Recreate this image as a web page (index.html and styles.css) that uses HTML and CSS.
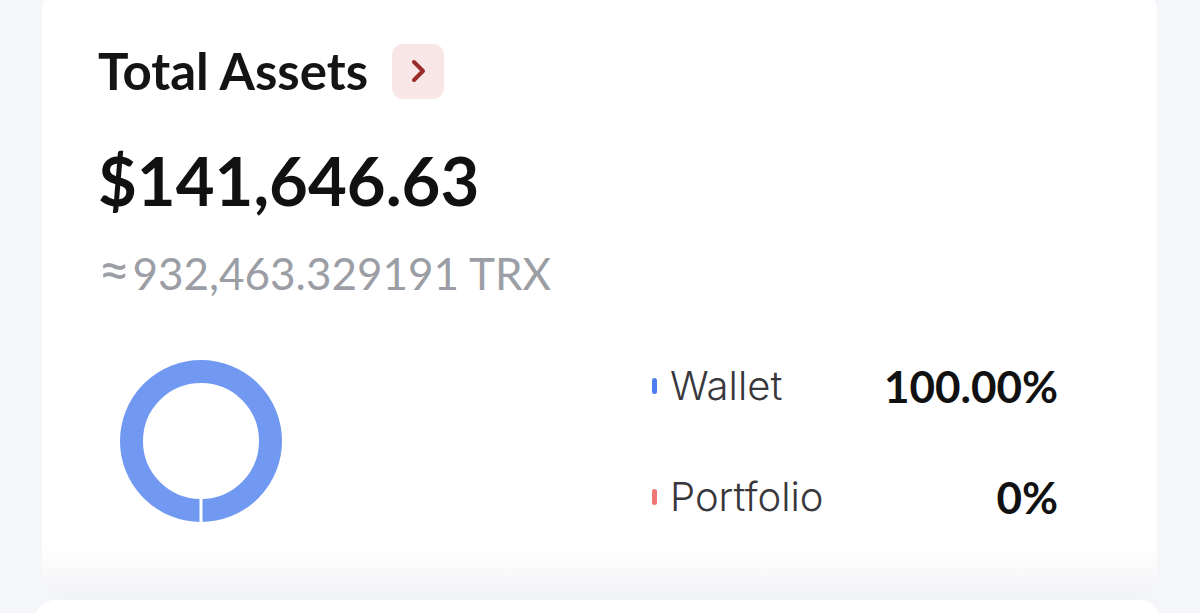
FILE: index.html
```html
<!DOCTYPE html>
<html lang="en">
<head>
    <meta charset="UTF-8">
    <meta name="viewport" content="width=device-width, initial-scale=1.0">
    <title>Total Assets</title>
    <link rel="stylesheet" href="styles.css">
</head>
<body>

<main class="page">
    <section class="card assets">
        <div class="title-row">
            <h1 class="title">Total Assets</h1>
            <a class="more" href="#">
                <svg width="24" height="28" viewBox="0 0 24 28">
                    <path d="M8 5 L17 14 L8 23" fill="none" stroke="#9b2b2b" stroke-width="4" stroke-linecap="round" stroke-linejoin="round"/>
                </svg>
            </a>
        </div>
        <p class="amount">$141,646.63</p>
        <p class="approx"><span class="approx-sign">≈</span>932,463.329191 TRX</p>

        <div class="chart-row">
            <svg class="donut" width="164" height="164" viewBox="0 0 164 164">
                <circle cx="82" cy="82" r="69.5" fill="none" stroke="#7299f2" stroke-width="23"/>
                <line x1="82" y1="138" x2="82" y2="164" stroke="#fff" stroke-width="3"/>
            </svg>
            <ul class="legend">
                <li class="legend-item">
                    <span class="dot wallet"></span>
                    <span class="label">Wallet</span>
                    <span class="value">100.00%</span>
                </li>
                <li class="legend-item">
                    <span class="dot portfolio"></span>
                    <span class="label">Portfolio</span>
                    <span class="value">0%</span>
                </li>
            </ul>
        </div>
    </section>

    <section class="card next"></section>
</main>

</body>
</html>
```

FILE: styles.css
```css
body {
    margin: 0;
    padding: 0;
    background-color: #f5f6fa;
    font-family: Lato, "Noto Sans", sans-serif;
    color: #111;
    overflow: hidden;
}
.page {
    display: flex;
    flex-direction: column;
}
.card {
    background-color: #fff;
    border-radius: 24px;
}
.assets {
    margin: -14px 43px 0 42px;
    height: 614px;
    padding: 0 99px 0 56px;
    box-sizing: border-box;
    background: linear-gradient(to bottom, #fff 91%, #f2f3f5 100%);
}
.title-row {
    display: flex;
    align-items: center;
    gap: 24px;
    padding-top: 57px;
}
.title {
    margin: 0;
    font-size: 51px;
    font-weight: 700;
    line-height: 56px;
    color: #141414;
}
.more {
    display: flex;
    align-items: center;
    justify-content: center;
    width: 52px;
    height: 55px;
    border-radius: 11px;
    background-color: #f9e7e7;
}
.amount {
    margin: 46px 0 0;
    font-size: 67px;
    font-weight: 700;
    line-height: 70px;
    color: #111;
}
.approx {
    margin: 34px 0 0;
    font-size: 44px;
    font-weight: 400;
    line-height: 48px;
    color: #9c9ea5;
}
.approx-sign {
    font-size: 56px;
    line-height: 40px;
    margin-right: 2px;
}
.chart-row {
    display: flex;
    align-items: center;
    margin-top: 62px;
}
.donut {
    margin-left: 21px;
}
.legend {
    list-style: none;
    margin: 0 0 0 auto;
    padding: 0;
    width: 406px;
    display: flex;
    flex-direction: column;
    gap: 73px;
}
.legend-item {
    display: flex;
    align-items: center;
    height: 38px;
}
.dot {
    width: 5px;
    height: 16px;
    border-radius: 3px;
    margin-right: 13px;
}
.dot.wallet {
    background-color: #4b7ff0;
}
.dot.portfolio {
    background-color: #f07575;
}
.label {
    font-family: Inter, "Noto Sans", sans-serif;
    font-size: 40px;
    font-weight: 300;
    color: #38383d;
}
.value {
    margin-left: auto;
    font-size: 44px;
    font-weight: 700;
    color: #111;
}
.next {
    margin: 0 40px 0 35px;
    height: 40px;
    border-radius: 22px;
}
```
